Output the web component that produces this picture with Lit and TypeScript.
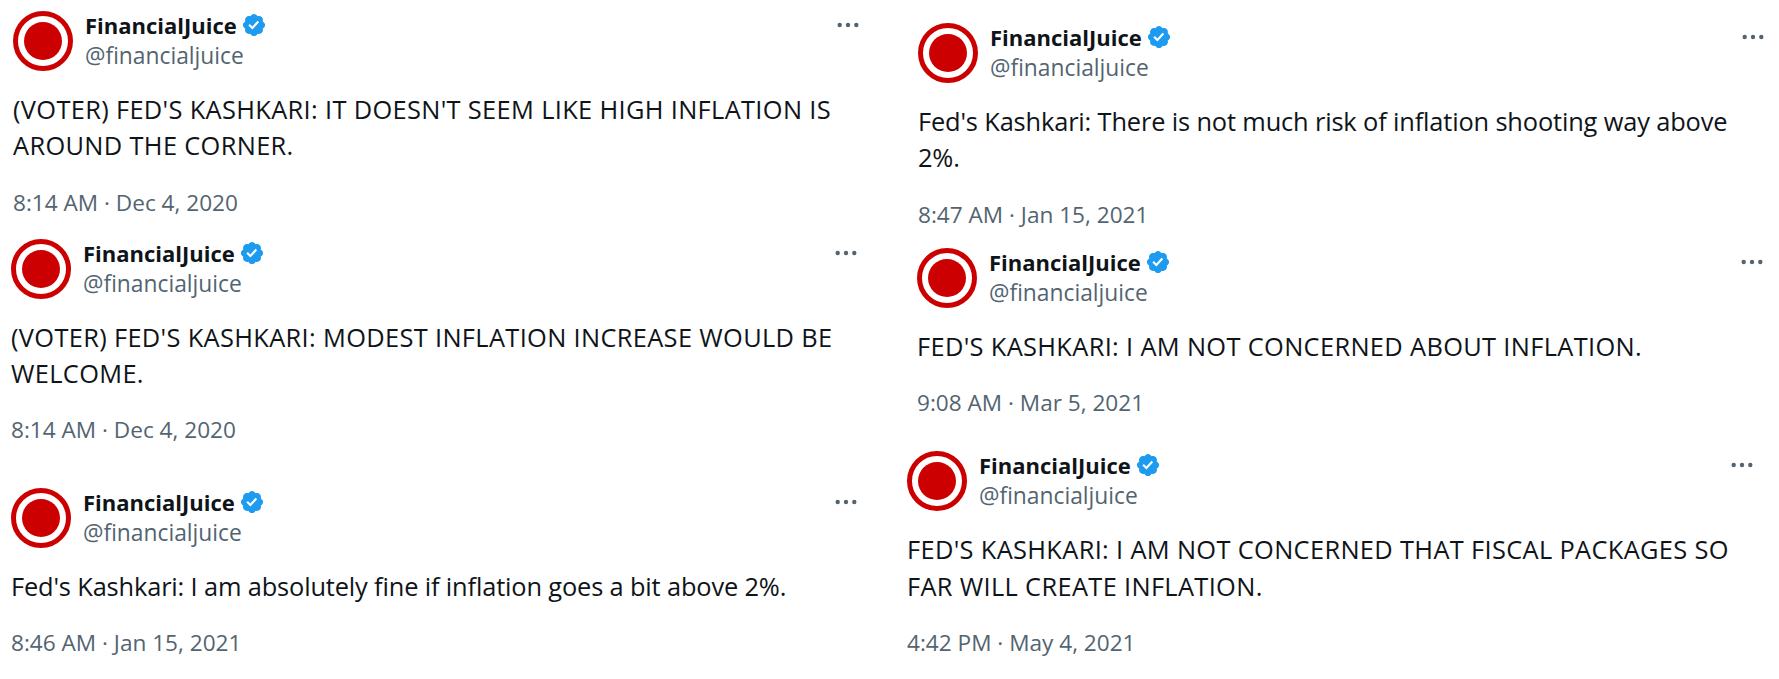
import { LitElement, html, css } from "lit";
import { customElement } from "lit/decorators.js";

interface Tweet { cls: string; caps: boolean; lines: string[]; time: string; }

const left: Tweet[] = [
  { cls: "t1", caps: true, lines: ["(VOTER) FED'S KASHKARI: IT DOESN'T SEEM LIKE HIGH INFLATION IS", "AROUND THE CORNER."], time: "8:14 AM · Dec 4, 2020" },
  { cls: "t2", caps: true, lines: ["(VOTER) FED'S KASHKARI: MODEST INFLATION INCREASE WOULD BE", "WELCOME."], time: "8:14 AM · Dec 4, 2020" },
  { cls: "t3", caps: false, lines: ["Fed's Kashkari: I am absolutely fine if inflation goes a bit above 2%."], time: "8:46 AM · Jan 15, 2021" },
];
const right: Tweet[] = [
  { cls: "t4", caps: false, lines: ["Fed's Kashkari: There is not much risk of inflation shooting way above", "2%."], time: "8:47 AM · Jan 15, 2021" },
  { cls: "t5", caps: true, lines: ["FED'S KASHKARI: I AM NOT CONCERNED ABOUT INFLATION."], time: "9:08 AM · Mar 5, 2021" },
  { cls: "t6", caps: true, lines: ["FED'S KASHKARI: I AM NOT CONCERNED THAT FISCAL PACKAGES SO", "FAR WILL CREATE INFLATION."], time: "4:42 PM · May 4, 2021" },
];

@customElement("app-root")
export class AppRoot extends LitElement {
  static styles = css`
    :host { display: block; width: 1779px; height: 679px; background: #fff; overflow: hidden;
      font-family: "Open Sans", "Noto Sans", sans-serif; color: #0f1419; }
    .page { display: flex; align-items: flex-start; }
    .col { display: flex; flex-direction: column; align-items: flex-start; }
    .col-l { width: 907px; padding-left: 11px; box-sizing: border-box; }
    .tweet { width: 847px; }
    .t1 { margin: 11px 0 0 2px; }
    .t2 { margin-top: 21px; }
    .t3 { margin-top: 42.4px; }
    .t4 { margin: 23px 0 0 11px; }
    .t5 { margin: 18.5px 0 0 10px; }
    .t6 { margin-top: 32.9px; }
    .head { display: flex; align-items: flex-start; height: 60px; }
    .avatar { width: 60px; height: 60px; flex: none; }
    .who { margin-left: 12px; flex: 1; }
    .nameline { display: flex; align-items: center; height: 28px; margin-bottom: 2px; }
    .name { font-size: 22px; font-weight: 700; }
    .badge { width: 26px; height: 26px; margin-left: 4px; fill: #1d9bf0; }
    .handle { font-size: 22.8px; line-height: 30px; color: #536471; }
    .more { width: 26px; height: 26px; flex: none; fill: #536471; margin-top: 1px; margin-right: -1px; }
    .body { margin-top: 20px; font-size: 25.4px; line-height: 36.3px; letter-spacing: -0.15px; white-space: nowrap; }
    .body.caps { letter-spacing: 0.34px; }
    .time { margin-top: 24px; font-size: 22.6px; line-height: 30px; color: #536471; }
  `;

  private tweet(t: Tweet) {
    return html`<article class="tweet ${t.cls}">
      <div class="head">
        <svg class="avatar" viewBox="0 0 60 60" role="img" aria-label="FinancialJuice">
          <circle cx="30" cy="30" r="27.5" fill="#fff" stroke="#cc0000" stroke-width="5"></circle>
          <circle cx="30" cy="30" r="19" fill="#cc0000"></circle>
        </svg>
        <div class="who">
          <div class="nameline">
            <span class="name">FinancialJuice</span>
            <svg class="badge" viewBox="0 0 24 24"><path d="M22.25 12c0-1.43-.88-2.67-2.19-3.34.46-1.39.2-2.9-.81-3.91s-2.52-1.27-3.91-.81c-.66-1.31-1.91-2.19-3.34-2.19s-2.67.88-3.33 2.19c-1.4-.46-2.91-.2-3.92.81s-1.26 2.52-.8 3.91c-1.31.67-2.2 1.91-2.2 3.34s.89 2.67 2.2 3.34c-.46 1.39-.21 2.9.8 3.91s2.52 1.26 3.91.81c.67 1.31 1.91 2.19 3.34 2.19s2.68-.88 3.34-2.19c1.39.45 2.9.2 3.91-.81s1.27-2.52.81-3.91c1.31-.67 2.19-1.91 2.19-3.34zm-11.71 4.2L6.8 12.46l1.41-1.42 2.26 2.26 4.8-5.23 1.47 1.36-6.2 6.77z"></path></svg>
          </div>
          <div class="handle">@financialjuice</div>
        </div>
        <svg class="more" viewBox="0 0 26 26"><circle cx="4.7" cy="13" r="2.2"></circle><circle cx="13" cy="13" r="2.2"></circle><circle cx="21.3" cy="13" r="2.2"></circle></svg>
      </div>
      <div class="body ${t.caps ? "caps" : ""}">${t.lines.map((l) => html`<div>${l}</div>`)}</div>
      <div class="time">${t.time}</div>
    </article>`;
  }

  render() {
    return html`<div class="page">
      <div class="col col-l">${left.map((t) => this.tweet(t))}</div>
      <div class="col">${right.map((t) => this.tweet(t))}</div>
    </div>`;
  }
}
